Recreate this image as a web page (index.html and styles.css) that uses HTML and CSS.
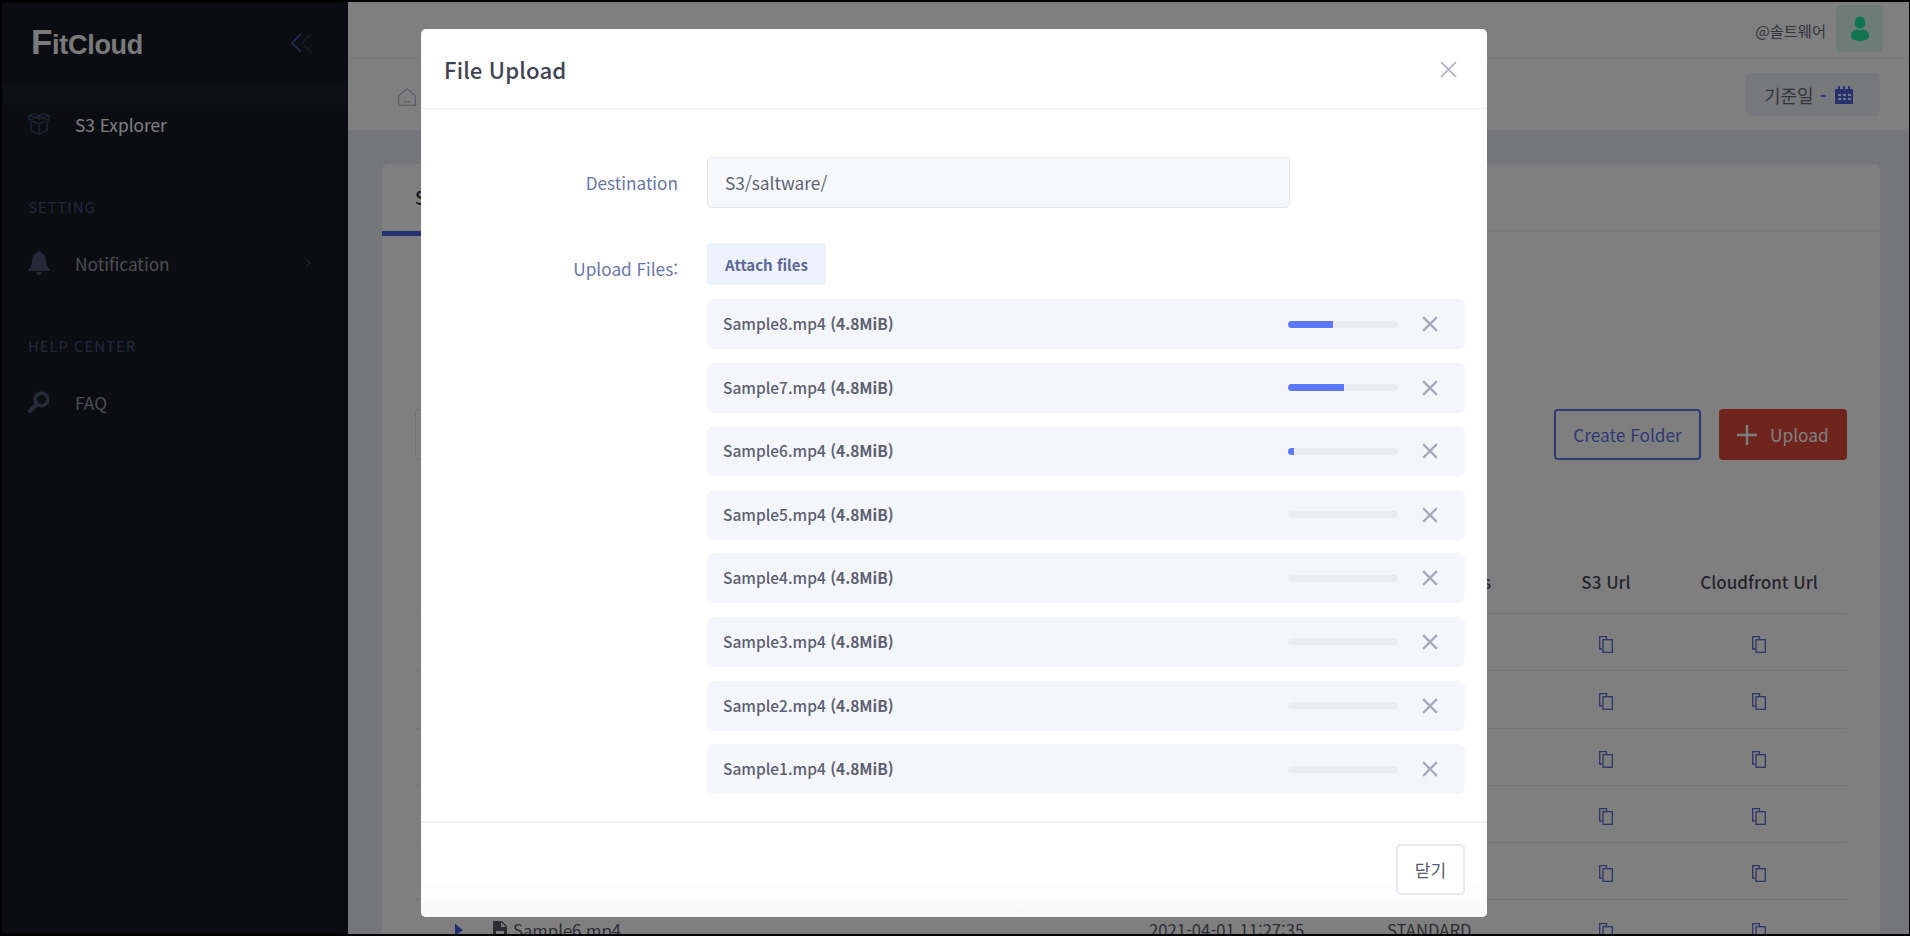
FILE: index.html
```html
<!DOCTYPE html>
<html lang="ko">
<head>
<meta charset="utf-8">
<title>FitCloud S3 Explorer</title>
<link rel="stylesheet" href="styles.css">
</head>
<body>
<div class="app">
  <aside class="sidebar">
    <div class="brand">
      <span class="logo"><span class="logo-f">F</span>itCloud</span>
      <svg class="collapse" viewBox="0 0 22 20" fill="none" stroke-width="1.6"><path d="M11 1 2 10l9 9"/><path d="M21 1l-9 9 9 9" class="collapse-b"/></svg>
    </div>
    <a class="nav-item active">
      <svg class="nav-icon" viewBox="0 0 22 22" fill="none" stroke="currentColor" stroke-width="1.2"><path d="M11 5 1 2.500 6 0.800 11 2.500 16 0.800 21 2.500 11 5.800 1 2.500M1 2.500V7L11 10.500 21 7V2.500M1 7l10-3.500L21 7M3 9v8.500l8 3.500 8-3.500V9M11 10.500V21"/></svg>
      <span>S3 Explorer</span>
    </a>
    <div class="nav-title first">SETTING</div>
    <a class="nav-item">
      <svg class="nav-icon" viewBox="0 0 22 24" fill="currentColor"><path d="M11 0c1 0 1.600.7 1.700 1.700C16.500 2.700 18 6 18 10c0 4 1.300 6.500 3.500 8.300.6.500.4 1.700-.6 1.700H1.100c-1 0-1.200-1.200-.6-1.700C2.700 16.500 4 14 4 10c0-4 1.500-7.300 5.300-8.300C9.400.7 10 0 11 0zM8 21h6c0 1.500-1.300 3-3 3s-3-1.500-3-3z"/></svg>
      <span>Notification</span>
      <svg class="nav-arrow" viewBox="0 0 6 10" fill="none" stroke="currentColor" stroke-width="1"><path d="M1 1l4 4-4 4"/></svg>
    </a>
    <div class="nav-title">HELP CENTER</div>
    <a class="nav-item">
      <svg class="nav-icon" viewBox="0 0 22 22" fill="none" stroke="currentColor"><circle cx="13.500" cy="8.500" r="6.300" stroke-width="3.500"/><path d="M8.500 13.500 2 20" stroke-width="4.500" stroke-linecap="round"/></svg>
      <span>FAQ</span>
    </a>
  </aside>

  <main class="main">
    <header class="topbar">
      <span class="user-name">@솔트웨어</span>
      <span class="avatar">
        <svg viewBox="0 0 22 30" fill="currentColor"><ellipse cx="11" cy="8" rx="6.500" ry="7.500"/><path d="M7 16c-4 1-7 4-7 8 0 3 5 6 11 6s11-3 11-6c0-4-3-7-7-8-2.500 1.500-5.500 1.500-8 0z"/></svg>
      </span>
    </header>
    <div class="subbar">
      <svg class="home" viewBox="0 0 18 18" fill="none" stroke="currentColor" stroke-width="1.200"><path d="M.7 17.300V7.500L9 .8l8.300 6.700v9.800zM5.500 13.800h7"/></svg>
      <button class="date-btn">기준일 <b>-</b>
        <svg viewBox="0 0 18 18" fill="currentColor"><path fill-rule="evenodd" d="M0 3h3V0h2v3h3V0h2v3h3V0h2v3h3v15H0zM3 8v2h3V8zm5 0v2h3V8zm5 0v2h3V8zM3 12v2h3v-2zm5 0v2h3v-2zm5 0v2h3v-2z"/></svg>
      </button>
    </div>
    <div class="content">
      <section class="card">
        <div class="tabs"><span class="tab">S3 Explorer</span></div>
        <div class="card-body">
          <div class="toolbar">
            <span class="search-box"></span>
            <button class="btn-outline">Create Folder</button>
            <button class="btn-upload">
              <svg viewBox="0 0 20 20" fill="none" stroke="currentColor" stroke-width="2.400"><path d="M10 0v20M0 10h20"/></svg>
              Upload
            </button>
          </div>
          <div class="table">
            <div class="t-row t-head"><span></span><span></span><span class="th-class">Storage Class</span><span class="c">S3 Url</span><span class="c">Cloudfront Url</span></div>
            <div class="t-row"><span></span><span></span><span></span><span class="c"><svg class="copy" viewBox="0 0 14 17"><use href="#copy-icon"/></svg></span><span class="c"><svg class="copy" viewBox="0 0 14 17"><use href="#copy-icon"/></svg></span></div>
            <div class="t-row"><span></span><span></span><span></span><span class="c"><svg class="copy" viewBox="0 0 14 17"><use href="#copy-icon"/></svg></span><span class="c"><svg class="copy" viewBox="0 0 14 17"><use href="#copy-icon"/></svg></span></div>
            <div class="t-row"><span></span><span></span><span></span><span class="c"><svg class="copy" viewBox="0 0 14 17"><use href="#copy-icon"/></svg></span><span class="c"><svg class="copy" viewBox="0 0 14 17"><use href="#copy-icon"/></svg></span></div>
            <div class="t-row"><span></span><span></span><span></span><span class="c"><svg class="copy" viewBox="0 0 14 17"><use href="#copy-icon"/></svg></span><span class="c"><svg class="copy" viewBox="0 0 14 17"><use href="#copy-icon"/></svg></span></div>
            <div class="t-row"><span></span><span></span><span></span><span class="c"><svg class="copy" viewBox="0 0 14 17"><use href="#copy-icon"/></svg></span><span class="c"><svg class="copy" viewBox="0 0 14 17"><use href="#copy-icon"/></svg></span></div>
            <div class="t-row t-last">
              <span class="name-cell">
                <i class="caret"></i>
                <svg class="file" viewBox="0 0 14 17" fill="currentColor"><path fill-rule="evenodd" d="M0 0h9l5 5v12H0zM8 1v5h5zM3 10v5h8v-5z"/></svg>
                Sample6.mp4
              </span>
              <span>2021-04-01 11:27:35</span>
              <span>STANDARD</span>
              <span class="c"><svg class="copy" viewBox="0 0 14 17"><use href="#copy-icon"/></svg></span>
              <span class="c"><svg class="copy" viewBox="0 0 14 17"><use href="#copy-icon"/></svg></span>
            </div>
          </div>
        </div>
      </section>
    </div>
  </main>

  <div class="overlay">
    <div class="modal">
      <div class="modal-head">
        <h2>File Upload</h2>
        <svg class="x close" viewBox="0 0 16 16"><path d="M1 1l14 14M15 1 1 15"/></svg>
      </div>
      <div class="modal-body">
        <div class="form-row row-dest">
          <label>Destination</label>
          <div class="dest-input">S3/saltware/</div>
        </div>
        <div class="form-row">
          <label>Upload Files:</label>
          <div class="upload-col">
            <button class="attach">Attach files</button>
            <ul class="files">
              <li class="file-row"><span class="fname">Sample8.mp4 <b>(4.8MiB)</b></span><span class="bar"><i style="width:41%"></i></span><svg class="x" viewBox="0 0 14 14"><path d="M1 1l12 12M13 1 1 13"/></svg></li>
              <li class="file-row"><span class="fname">Sample7.mp4 <b>(4.8MiB)</b></span><span class="bar"><i style="width:51%"></i></span><svg class="x" viewBox="0 0 14 14"><path d="M1 1l12 12M13 1 1 13"/></svg></li>
              <li class="file-row"><span class="fname">Sample6.mp4 <b>(4.8MiB)</b></span><span class="bar"><i style="width:5%"></i></span><svg class="x" viewBox="0 0 14 14"><path d="M1 1l12 12M13 1 1 13"/></svg></li>
              <li class="file-row"><span class="fname">Sample5.mp4 <b>(4.8MiB)</b></span><span class="bar"></span><svg class="x" viewBox="0 0 14 14"><path d="M1 1l12 12M13 1 1 13"/></svg></li>
              <li class="file-row"><span class="fname">Sample4.mp4 <b>(4.8MiB)</b></span><span class="bar"></span><svg class="x" viewBox="0 0 14 14"><path d="M1 1l12 12M13 1 1 13"/></svg></li>
              <li class="file-row"><span class="fname">Sample3.mp4 <b>(4.8MiB)</b></span><span class="bar"></span><svg class="x" viewBox="0 0 14 14"><path d="M1 1l12 12M13 1 1 13"/></svg></li>
              <li class="file-row"><span class="fname">Sample2.mp4 <b>(4.8MiB)</b></span><span class="bar"></span><svg class="x" viewBox="0 0 14 14"><path d="M1 1l12 12M13 1 1 13"/></svg></li>
              <li class="file-row"><span class="fname">Sample1.mp4 <b>(4.8MiB)</b></span><span class="bar"></span><svg class="x" viewBox="0 0 14 14"><path d="M1 1l12 12M13 1 1 13"/></svg></li>
            </ul>
          </div>
        </div>
      </div>
      <div class="modal-foot">
        <button class="btn-close">닫기</button>
      </div>
    </div>
  </div>

  <svg class="defs" aria-hidden="true"><defs><g id="copy-icon" fill="none" stroke="currentColor" stroke-width="1.300"><path d="M3 13H.7V.7H7.500V3"/><rect x="4" y="3.700" width="9.300" height="12.600"/></g></defs></svg>
</div>
</body>
</html>
```
FILE: styles.css
```css
* { box-sizing: border-box; }
html, body { margin: 0; padding: 0; height: 100%; }
body {
  font-family: "Noto Sans CJK KR", "Noto Sans", sans-serif;
  background: #000;
  overflow: hidden;
}
button { font-family: inherit; cursor: pointer; }
.app {
  position: relative;
  width: 1910px;
  height: 936px;
  border: 2px solid #000;
  border-right-width: 1px;
  display: flex;
  overflow: hidden;
  background: #eaecf2;
}
.defs { position: absolute; width: 0; height: 0; }

/* sidebar */
.sidebar {
  width: 346px;
  flex: none;
  background: #181a24;
  color: #fff;
}
.brand {
  height: 83px;
  display: flex;
  align-items: flex-start;
  justify-content: space-between;
  padding: 26px 36px 0 29px;
}
.logo {
  font-family: "Liberation Sans", Arial, sans-serif;
  font-weight: 700;
  font-size: 27px;
  line-height: 28px;
  letter-spacing: -0.3px;
  color: #f4f4f4;
}
.logo-f { font-size: 35px; line-height: 28px; }
.collapse { width: 22px; height: 20px; margin-top: 5px; stroke: #4a57b8; }
.collapse-b { stroke: #2c3050; }
.nav-item {
  display: flex;
  align-items: center;
  height: 70px;
  padding: 0 37px 2px 26px;
  font-size: 17.300px;
  color: #9a9ca6;
}
.nav-item.active {
  color: #fdfdfd;
  height: 70px;
  padding-top: 10px;
  background: linear-gradient(#182028 0, #182028 20px, #191b25 20px, #191b25 100%);
}
.nav-icon { width: 22px; height: 24px; flex: none; margin-right: 25px; color: #495570; }
.active .nav-icon { color: #3f4d6e; }
.nav-arrow { width: 6px; height: 10px; margin-left: auto; color: #4e5266; }
.nav-title {
  padding-left: 26px;
  margin-top: 35px;
  margin-bottom: 10px;
  height: 24px;
  line-height: 24px;
  font-size: 15px;
  letter-spacing: 0.9px;
  color: #484c74;
}
.nav-title.first { margin-top: 40px; }

/* main */
.main { flex: 1; min-width: 0; display: flex; flex-direction: column; }
.topbar {
  height: 57px;
  flex: none;
  background: #fff;
  border-bottom: 1px solid #f3f3f5;
  display: flex;
  align-items: flex-start;
  justify-content: flex-end;
  padding: 3px 26px 0 0;
}
.user-name { font-size: 15.300px; line-height: 50px; color: #6a6c76; margin-right: 10px; }
.avatar {
  width: 47px;
  height: 47px;
  border-radius: 5px;
  background: #dcf8ee;
  color: #1fe89e;
  display: flex;
  align-items: center;
  justify-content: center;
}
.avatar svg { width: 22px; height: 25px; }
.subbar {
  height: 71px;
  flex: none;
  background: #fff;
  display: flex;
  align-items: flex-start;
  justify-content: space-between;
  padding: 14px 29px 0 50px;
}
.home { width: 18px; height: 18px; margin-top: 15px; color: #b5b9d0; }
.date-btn {
  width: 134px;
  height: 43px;
  border: 0;
  border-radius: 5px;
  background: #eef0f6;
  color: #6a6c76;
  font-size: 18px;
  display: flex;
  align-items: center;
  padding: 0 0 0 18px;
  gap: 6px;
}
.date-btn b { color: #5a6cde; font-weight: 700; }
.date-btn svg { width: 18px; height: 18px; margin-left: 3px; color: #5165e0; }
.content { flex: 1; min-height: 0; padding: 34px 29px 0 34px; }
.card { background: #fff; border-radius: 6px 6px 0 0; height: 900px; }
.tabs { height: 67px; border-bottom: 1px solid #f2f3f7; }
.tab {
  display: block;
  width: 150px;
  height: 72px;
  padding: 20px 0 0 33px;
  border-bottom: 5px solid #5567e0;
  font-size: 18px;
  font-weight: 500;
  color: #2f3140;
}
.card-body { padding: 178px 33px 0 33px; }
.toolbar { display: flex; justify-content: flex-end; gap: 18px; height: 51px; }
.search-box { width: 300px; border: 1px solid #e3e5ee; border-radius: 4px; margin-right: auto; }
.btn-outline {
  width: 147px;
  border: 2px solid #5e74e8;
  border-radius: 4px;
  background: #fff;
  color: #5e74e8;
  font-size: 17.300px;
}
.btn-upload {
  width: 128px;
  border: 0;
  border-radius: 4px;
  background: #de483c;
  color: #fff;
  font-size: 17.300px;
  display: flex;
  align-items: center;
  gap: 13px;
  padding: 0 0 0 18px;
}
.btn-upload svg { width: 20px; height: 20px; }
.table { margin-top: 88px; }
.t-row {
  display: grid;
  grid-template-columns: 734px 238px 143px 152px 154px;
  align-items: center;
  height: 57.3px;
  border-bottom: 1px solid #e8eaf2;
  font-size: 16.700px;
  color: #5a5c68;
}
.t-head { height: 66px; padding-top: 1px; font-weight: 500; color: #4a4c58; font-size: 17px; }
.th-class { margin-left: -5px; }
.t-last > span:not(.c) { padding-top: 2px; }
.c { text-align: center; display: block; }
.copy { width: 14px; height: 17px; color: #5c6ad2; vertical-align: middle; }
.name-cell { display: flex; align-items: center; padding-left: 40px; color: #5a5c68; }
.caret {
  width: 8px;
  height: 12px;
  background: #4154d8;
  clip-path: polygon(0 0, 100% 55%, 0 100%);
  margin-right: 30px;
}
.file { width: 14px; height: 17px; margin-right: 6px; color: #585a66; }

/* overlay and modal */
.overlay {
  position: absolute;
  inset: 0;
  background: rgba(0, 0, 0, .5);
  display: flex;
  justify-content: center;
  align-items: flex-start;
  padding-top: 27px;
}
.modal {
  width: 1066px;
  height: 888px;
  background: #fff;
  border-radius: 5px;
  display: flex;
  flex-direction: column;
  margin-left: -3px;
}
.modal-head {
  height: 80px;
  flex: none;
  border-bottom: 1px solid #e9ebf3;
  display: flex;
  align-items: center;
  justify-content: space-between;
  padding: 0 30px 0 23px;
}
.modal-head h2 { margin: 0; font-size: 22.200px; font-weight: 500; color: #3f4254; letter-spacing: .1px; }
.x { fill: none; stroke: #a6a9bb; stroke-width: 2; width: 16px; height: 16px; flex: none; position: relative; top: 1px; }
.close { width: 17px; height: 17px; stroke: #b4b6c4; stroke-width: 1.700; top: 1px; }
.modal-body { flex: 1; padding: 48px 22px 0 0; min-height: 0; }
.form-row { display: grid; grid-template-columns: 257px 1fr; column-gap: 29px; }
.row-dest { margin-bottom: 35px; }
.form-row label {
  text-align: right;
  padding-top: 14px;
  font-size: 17.200px;
  line-height: 24px;
  color: #6a75ab;
}
.dest-input {
  width: 583px;
  height: 51px;
  background: #f7f8fa;
  border: 1px solid #e4e6ef;
  border-radius: 5px;
  padding-left: 17px;
  line-height: 49px;
  font-size: 17.300px;
  color: #5e6278;
}
.attach {
  display: block;
  width: 119px;
  height: 42px;
  border: 0;
  border-radius: 4px;
  background: #eef2fc;
  color: #5d6898;
  font-size: 15px;
  font-weight: 700;
}
.files { list-style: none; margin: 14px 0 0; padding: 0; display: flex; flex-direction: column; gap: 13.6px; }
.file-row {
  height: 50px;
  display: flex;
  align-items: center;
  background: #f5f6fb;
  border-radius: 6px;
  padding: 0 27px 2px 16px;
}
.fname { flex: 1; font-size: 15.500px; font-weight: 500; color: #5c6070; }
.fname b { font-weight: 700; }
.bar {
  width: 110px;
  height: 7px;
  margin-right: 24px;
  position: relative;
  top: 1px;
  background: #ecedf2;
  border-radius: 4px;
  overflow: hidden;
}
.bar i { display: block; height: 100%; background: #5b78ff; }
.modal-foot {
  height: 96px;
  flex: none;
  border-top: 2px solid #f0f1f7;
  background: linear-gradient(#fff 60%, #f8f8f9 100%);
  border-radius: 0 0 5px 5px;
  display: flex;
  justify-content: flex-end;
  padding: 21px 22px 0 0;
}
.btn-close {
  width: 69px;
  height: 51px;
  background: #fff;
  border: 2px solid #e6e7ef;
  border-radius: 5px;
  font-size: 17px;
  color: #555868;
}
```
